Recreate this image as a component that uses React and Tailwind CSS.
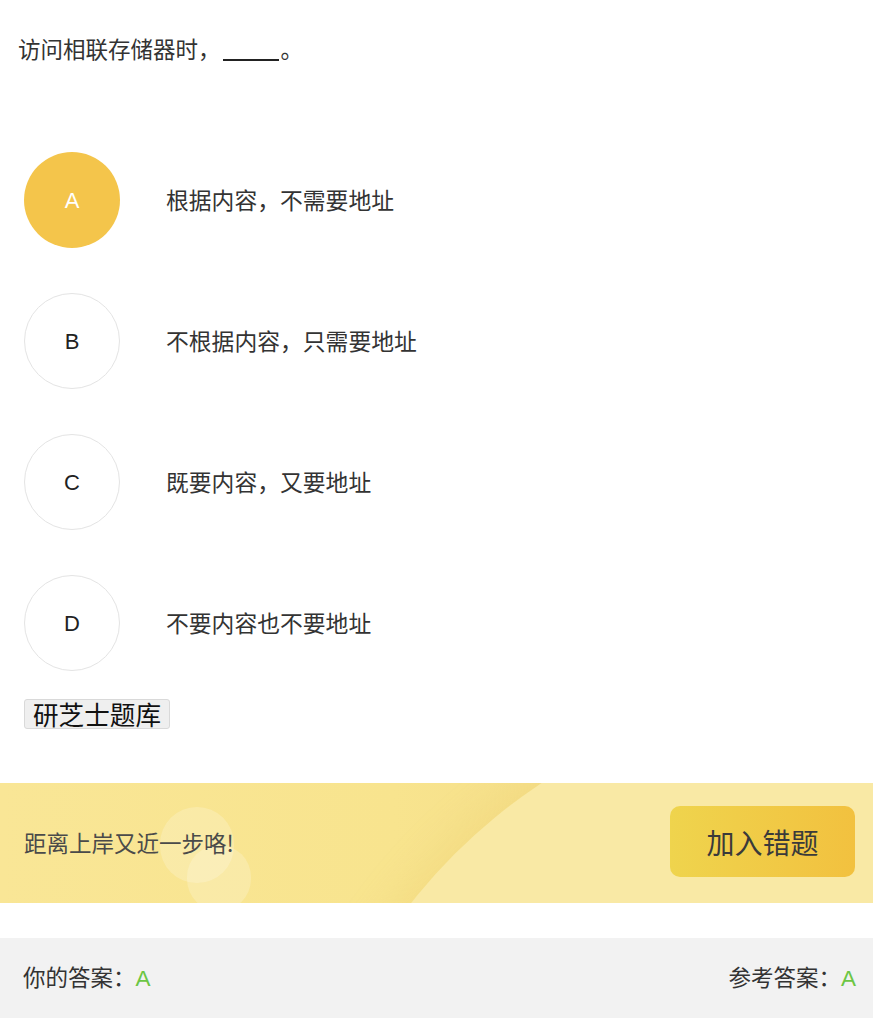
import React from 'react';

const options = [
  { key: 'A', text: '根据内容，不需要地址', selected: true },
  { key: 'B', text: '不根据内容，只需要地址' },
  { key: 'C', text: '既要内容，又要地址' },
  { key: 'D', text: '不要内容也不要地址' },
];

const App = () => {
  return (
    <div className="w-full min-h-[1024px] bg-white text-[#333] font-['Noto_Sans_CJK_SC','Noto_Sans',sans-serif]">
      {/* Question */}
      <p className="pl-[18px] pt-[31px] text-[22.5px] leading-[34px]">
        访问相联存储器时，
        <span className="inline-block w-[56px] h-[2px] bg-[#222] align-[-3px] mx-[2px]"></span>
        。
      </p>

      {/* Options */}
      <div className="mt-[87px] flex flex-col gap-[45px] pl-[24px]">
        {options.map(opt => (
          <div key={opt.key} className="flex items-center gap-[46px]">
            <div
              className={`w-[96px] h-[96px] rounded-full flex items-center justify-center text-[22px] font-['Liberation_Sans',sans-serif] ${
                opt.selected ? 'bg-[#f4c54b] text-white' : 'border border-[#e4e4e4] text-[#222]'
              }`}
            >
              {opt.key}
            </div>
            <span className="text-[22.8px] leading-[34px]">{opt.text}</span>
          </div>
        ))}
      </div>

      <button className="ml-[24px] mt-[28px] h-[30px] px-[8px] bg-[#efefef] border border-[#d9d9d9] rounded-[3px] text-[25.6px] leading-[28px] text-[#111]">
        研芝士题库
      </button>

      {/* Banner */}
      <div className="relative mt-[53px] h-[120px] overflow-hidden bg-[linear-gradient(90deg,#f9e696_0%,#f8e48e_45%,#f6e08b_60%)] flex items-center justify-between pl-[24px] pr-[18px]">
        <div className="absolute left-[292px] top-[-92px] w-[1112px] h-[1112px] rounded-full bg-[#f9e9a5] shadow-[-14px_-4px_36px_rgba(230,200,100,0.22)]"></div>
        <div className="absolute left-[160px] top-[24px] w-[74px] h-[76px] rounded-full bg-white/20"></div>
        <div className="absolute left-[187px] top-[62px] w-[64px] h-[66px] rounded-full bg-white/20"></div>
        <span className="relative text-[22.5px] text-[#4a4a4a]">距离上岸又近一步咯!</span>
        <button className="relative -mt-[3px] w-[185px] h-[71px] rounded-[10px] bg-[linear-gradient(90deg,#efd44d,#f2c13f)] text-[28px] text-[#3a3a3a]">
          加入错题
        </button>
      </div>

      {/* Answers */}
      <div className="mt-[35px] h-[80px] bg-[#f2f2f2] flex items-center justify-between pl-[23px] pr-[17px] text-[22.5px] text-[#333]">
        <span>
          你的答案：<span className="text-[#6cc644] font-['Liberation_Sans',sans-serif]">A</span>
        </span>
        <span>
          参考答案：<span className="text-[#6cc644] font-['Liberation_Sans',sans-serif]">A</span>
        </span>
      </div>
    </div>
  );
};

export default App;
